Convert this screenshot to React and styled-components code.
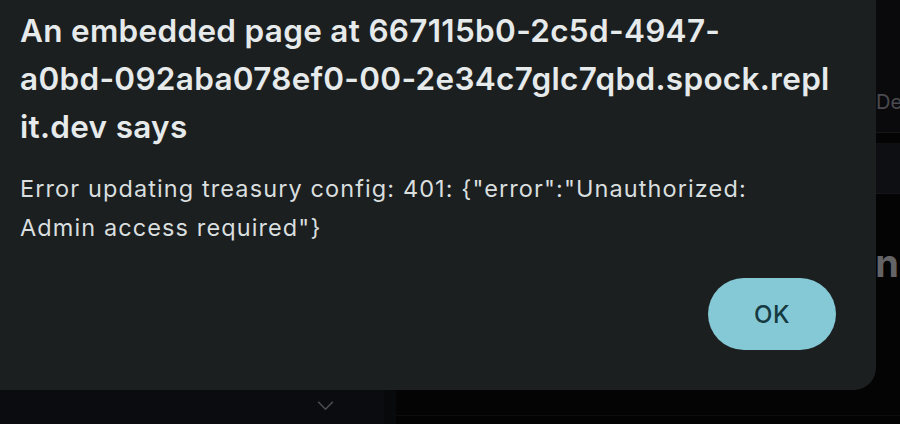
import React from "react";
import styled, { createGlobalStyle } from "styled-components";

const GlobalStyle = createGlobalStyle`
  html, body {
    margin: 0;
    padding: 0;
    background: #030304;
    font-family: Inter, "Noto Sans", "DejaVu Sans", sans-serif;
  }
`;

const tabs = ["Summary", "Wallets", "Ledger", "Limits", "Deposits"];

const App = () => {
  return (
    <Page>
      <GlobalStyle />
      <Shell>
        <Sidebar>
          <SidebarBody />
          <SidebarFooter>
            <Chevron viewBox="0 0 20 12" aria-hidden="true">
              <path d="M2 2 L10 10 L18 2" />
            </Chevron>
          </SidebarFooter>
        </Sidebar>
        <Gutter />
        <Main>
          <TopBar />
          <TabRow>
            {tabs.map((t) => (
              <Tab key={t}>{t}</Tab>
            ))}
          </TabRow>
          <FilterBox />
          <Heading>Treasury Configuration</Heading>
          <MainBody />
          <MainFooter />
        </Main>
      </Shell>

      <Dialog role="alertdialog">
        <Title>
          An embedded page at 667115b0-2c5d-4947-
          <br />
          a0bd-092aba078ef0-00-2e34c7glc7qbd.spock.repl
          <br />
          it.dev says
        </Title>
        <Message>
          Error updating treasury config: 401: {"{"}"error":"Unauthorized:
          <br />
          Admin access required"{"}"}
        </Message>
        <Actions>
          <OkButton>OK</OkButton>
        </Actions>
      </Dialog>
    </Page>
  );
};

const Page = styled.div`
  position: relative;
  width: 900px;
  height: 424px;
  overflow: hidden;
  background: #030304;
`;

const Shell = styled.div`
  display: flex;
  height: 100%;
`;

const Sidebar = styled.aside`
  width: 384px;
  display: flex;
  flex-direction: column;
  background: #0b0c0f;
`;

const SidebarBody = styled.div`
  flex: 1;
`;

const SidebarFooter = styled.div`
  height: 34px;
  display: flex;
  align-items: center;
  justify-content: flex-end;
  padding-right: 49px;
`;

const Chevron = styled.svg`
  width: 19px;
  height: 11px;
  margin-bottom: 4px;
  fill: none;
  stroke: #4d4f54;
  stroke-width: 1.6;
`;

const Gutter = styled.div`
  width: 12px;
  background: #08090b;
`;

const Main = styled.main`
  flex: 1;
  display: flex;
  flex-direction: column;
  overflow: hidden;
  background: #040405;
`;

const TopBar = styled.div`
  height: 66px;
  background: #0a0a0c;
`;

const TabRow = styled.div`
  display: flex;
  height: 66px;
  align-items: center;
  background: #0a0a0c;
  border-bottom: 1px solid #16171a;
  white-space: nowrap;
`;

const Tab = styled.div`
  flex: 0 0 120px;
  font-size: 20px;
  color: #4a4b50;
  margin-top: 5px;
`;

const FilterBox = styled.div`
  height: 50px;
  margin-top: 10px;
  background: #0e0f12;
  border-bottom: 1px solid #15161a;
`;

const Heading = styled.h2`
  margin: 46px 0 0;
  padding-right: 1px;
  font-size: 38px;
  font-weight: 700;
  color: #646466;
  text-align: right;
  white-space: nowrap;
`;

const MainBody = styled.div`
  flex: 1;
`;

const MainFooter = styled.div`
  height: 8px;
  border-top: 1px solid #0d0d10;
  background: #030304;
`;

const Dialog = styled.div`
  position: absolute;
  top: 0;
  left: 0;
  width: 876px;
  height: 390px;
  box-sizing: border-box;
  padding: 7px 40px 40px 20px;
  display: flex;
  flex-direction: column;
  background: #1b1f20;
  border-bottom-right-radius: 22px;
`;

const Title = styled.h1`
  margin: 0;
  font-size: 31.5px;
  line-height: 48px;
  font-weight: 600;
  color: #e6eaeb;
  letter-spacing: 0.3px;
  white-space: nowrap;
`;

const Message = styled.p`
  margin: 18px 0 0;
  font-size: 23.5px;
  line-height: 39px;
  font-weight: 400;
  color: #d9dedf;
  letter-spacing: 1.1px;
  white-space: nowrap;
`;

const Actions = styled.div`
  margin-top: auto;
  display: flex;
  justify-content: flex-end;
`;

const OkButton = styled.button`
  width: 128px;
  height: 72px;
  border: none;
  border-radius: 36px;
  background: #85c9d6;
  color: #163a41;
  font-family: inherit;
  font-size: 24px;
  font-weight: 500;
  letter-spacing: 0.5px;
  cursor: pointer;
`;

export default App;
